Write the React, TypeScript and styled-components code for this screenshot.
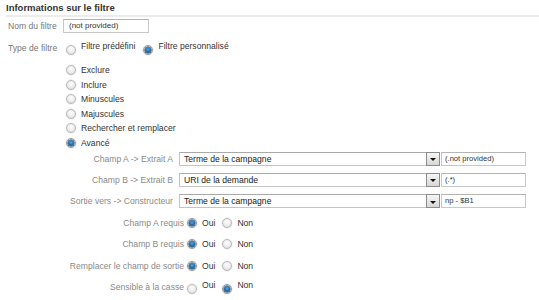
import React from "react";
import styled, { createGlobalStyle, css } from "styled-components";

const Global = createGlobalStyle`
  html, body { margin: 0; padding: 0; background: #fff; }
  body { font-family: "Liberation Sans", Arial, sans-serif; }
`;

const Page = styled.div`
  width: 539px;
  height: 300px;
  overflow: hidden;
  display: flex;
  flex-direction: column;
  padding-left: 6px;
  box-sizing: border-box;
`;

const Title = styled.div`
  font-size: 9.5px;
  font-weight: bold;
  color: #333;
  height: 15px;
  line-height: 15px;
  border-bottom: 2px solid #ececec;
`;

const FieldRow = styled.div<{ $h: number; $mt: number }>`
  display: grid;
  grid-template-columns: 57px 1fr;
  align-items: center;
  height: ${(p) => p.$h}px;
  margin-top: ${(p) => p.$mt}px;
`;

const FieldLabel = styled.span`
  font-size: 8.6px;
  color: #777;
  padding-left: 2px;
`;

const TextBox = styled.div<{ $w: number }>`
  box-sizing: border-box;
  width: ${(p) => p.$w}px;
  height: 14px;
  border: 1px solid #c8c8c8;
  border-top-color: #b4b4b4;
  background: #fff;
  font-size: 8px;
  color: #333;
  line-height: 12px;
  padding-left: 5px;
  white-space: nowrap;
  overflow: hidden;
`;

const Options = styled.div`
  display: flex;
  align-items: center;
`;

const Option = styled.label<{ $raised?: boolean; $gap?: number }>`
  display: flex;
  align-items: ${(p) => (p.$raised ? "flex-start" : "center")};
  margin-right: ${(p) => p.$gap ?? 5}px;
  font-size: 8.6px;
  color: #333;
  ${(p) =>
    p.$raised &&
    css`
      & > span:first-child {
        margin-top: 4px;
      }
    `}
`;

const Radio = styled.span<{ $on?: boolean }>`
  box-sizing: border-box;
  width: 10px;
  height: 10px;
  border-radius: 50%;
  margin: 0 5px 0 3px;
  flex: none;
  border: 1px solid #b9b9b9;
  background: radial-gradient(circle at 50% 35%, #fdfdfd 0%, #ececec 55%, #d4d4d4 100%);
  box-shadow: 0 0 0 0.5px #e4e4e4;
  display: flex;
  align-items: center;
  justify-content: center;
  ${(p) =>
    p.$on &&
    css`
      border-color: #9a9a9a;
      &::after {
        content: "";
        width: 6px;
        height: 6px;
        border-radius: 50%;
        background: radial-gradient(circle at 50% 40%, #5aa6e0 0%, #1b6aa8 55%, #0c3a66 100%);
        box-shadow: 0 0 0 0.5px #1d3c5a;
      }
    `}
`;

const OptionList = styled.div`
  display: flex;
  flex-direction: column;
  margin-top: 4.7px;
  padding-left: 57px;
`;

const ListItem = styled.label`
  display: flex;
  align-items: center;
  height: 14.6px;
  font-size: 8.6px;
  color: #333;
`;

const AdvBlock = styled.div`
  display: grid;
  grid-template-columns: 173px 261px 85px;
  column-gap: 0;
  row-gap: 7.2px;
  margin-top: 1.4px;
  align-items: center;
`;

const AdvLabel = styled.span`
  font-size: 8.6px;
  color: #8a8a8a;
  text-align: right;
  padding-right: 6px;
  white-space: nowrap;
`;

const Select = styled.div`
  box-sizing: border-box;
  height: 14px;
  margin-left: 0;
  border: 1px solid #c4c4c4;
  border-top-color: #a9a9a9;
  background: #fff;
  display: flex;
  align-items: center;
  justify-content: space-between;
  font-size: 8.6px;
  color: #222;
  padding-left: 4px;
`;

const DropButton = styled.span`
  box-sizing: border-box;
  width: 14px;
  height: 14px;
  margin-right: -1px;
  border: 1px solid #8c8c8c;
  background: linear-gradient(#f6f6f6, #d6d6d6);
  display: flex;
  align-items: center;
  justify-content: center;
  &::after {
    content: "";
    margin-top: 2px;
    border-left: 3px solid transparent;
    border-right: 3px solid transparent;
    border-top: 3px solid #111;
  }
`;

const SideInput = styled(TextBox)`
  margin-left: 1px;
  font-size: 7.6px;
  padding-left: 3px;
`;

const ReqBlock = styled.div`
  display: grid;
  grid-template-columns: 178px auto;
  grid-auto-rows: 21.5px;
  align-items: center;
  margin-top: 4px;
`;

const ReqLabel = styled(AdvLabel)`
  padding-right: 0;
`;

const YesNo = styled.div`
  display: flex;
  align-items: center;
  height: 100%;
`;

const mainTypes = ["Exclure", "Inclure", "Minuscules", "Majuscules", "Rechercher et remplacer", "Avancé"];

const advRows = [
  { label: "Champ A -> Extrait A", sel: "Terme de la campagne", val: "(.not provided)" },
  { label: "Champ B -> Extrait B", sel: "URI de la demande", val: "(.*)" },
  { label: "Sortie vers -> Constructeur", sel: "Terme de la campagne", val: "np - $B1" },
];

const reqRows = [
  { label: "Champ A requis", yes: true },
  { label: "Champ B requis", yes: true },
  { label: "Remplacer le champ de sortie", yes: true },
  { label: "Sensible à la casse", yes: false },
];

export default function App() {
  return (
    <>
      <Global />
      <Page>
        <Title>Informations sur le filtre</Title>
        <FieldRow $h={14} $mt={2}>
          <FieldLabel>Nom du filtre</FieldLabel>
          <TextBox $w={86}>(not provided)</TextBox>
        </FieldRow>
        <FieldRow $h={20} $mt={5}>
          <FieldLabel>Type de filtre</FieldLabel>
          <Options>
            <Option $raised>
              <Radio />
              <span>Filtre prédéfini</span>
            </Option>
            <Option $raised>
              <Radio $on />
              <span>Filtre personnalisé</span>
            </Option>
          </Options>
        </FieldRow>
        <OptionList>
          {mainTypes.map((t) => (
            <ListItem key={t}>
              <Radio $on={t === "Avancé"} />
              <span>{t}</span>
            </ListItem>
          ))}
        </OptionList>
        <AdvBlock>
          {advRows.map((r) => (
            <React.Fragment key={r.label}>
              <AdvLabel>{r.label}</AdvLabel>
              <Select>
                <span>{r.sel}</span>
                <DropButton />
              </Select>
              <SideInput $w={85}>{r.val}</SideInput>
            </React.Fragment>
          ))}
        </AdvBlock>
        <ReqBlock>
          {reqRows.map((r) => (
            <React.Fragment key={r.label}>
              <ReqLabel>{r.label}</ReqLabel>
              <YesNo>
                <Option $raised={!r.yes} $gap={4}>
                  <Radio $on={r.yes} />
                  <span>Oui</span>
                </Option>
                <Option $raised={!r.yes}>
                  <Radio $on={!r.yes} />
                  <span>Non</span>
                </Option>
              </YesNo>
            </React.Fragment>
          ))}
        </ReqBlock>
      </Page>
    </>
  );
}
